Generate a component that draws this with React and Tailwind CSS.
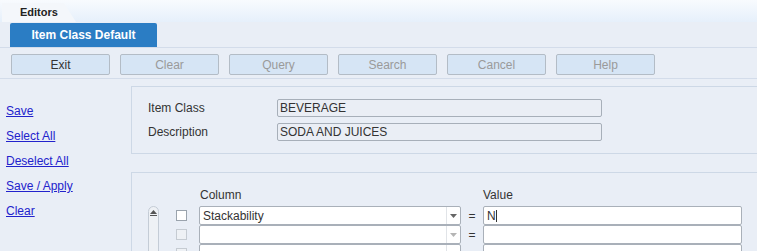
import React from "react";

const btns = ["Exit", "Clear", "Query", "Search", "Cancel", "Help"];
const links = ["Save", "Select All", "Deselect All", "Save / Apply", "Clear"];

function Row({ value, text, enabled }) {
  return (
    <div className="flex items-center h-[20px]">
      <div className="w-[40px] flex justify-end pr-[12px]">
        <div className={`w-[11px] h-[11px] border ${enabled ? "border-[#9aa3ad] bg-white" : "border-[#c5cbd2] bg-[#eef1f5]"}`} />
      </div>
      <div className="w-[262px] h-[19px] border border-[#a9b0b9] rounded-[2px] bg-white flex items-center">
        <span className="flex-1 pl-[3px] text-[12px] text-[#333]">{text}</span>
        <div className="w-[14px] h-full border-l border-[#e1e4e8] flex items-center justify-center">
          <svg width="7" height="4" viewBox="0 0 7 4"><path d="M0 0h7L3.5 4z" fill={enabled ? "#666" : "#b5b5b5"} /></svg>
        </div>
      </div>
      <div className="w-[22px] text-center text-[12px] text-[#333]">=</div>
      <div className="w-[259px] h-[19px] border border-[#a9b0b9] rounded-[2px] bg-white flex items-center">
        <span className="pl-[3px] text-[12px] text-[#333]">{value}</span>
        {value && <span className="w-px h-[12px] bg-[#333]" />}
      </div>
    </div>
  );
}

export default function App() {
  return (
    <div className="w-[757px] h-[251px] overflow-hidden bg-[#e9eef6] font-['Liberation_Sans',Arial,sans-serif] text-[#333]">
      <div className="h-[22px] bg-gradient-to-b from-[#f8fbfe] to-[#e6f0fb] relative">
        <div className="absolute left-[2px] top-[3px] h-[19px] w-[74px] bg-[#f4f7fb] [clip-path:polygon(0_0,62px_0,74px_19px,0_19px)] flex items-center pl-[18px] text-[11px] font-bold text-[#222]">
          Editors
        </div>
      </div>
      <div className="pl-[10px] pt-[1px] h-[26px] border-b border-[#d3dcea]">
        <div className="w-[147px] h-[24px] bg-[#2b7dc4] rounded-t-[2px] flex items-center justify-center text-white text-[12px] font-bold">
          Item Class Default
        </div>
      </div>
      <div className="flex gap-[10px] pl-[11px] pt-[6px] border-b border-[#d3dcea] h-[31px]">
        {btns.map((b, i) => (
          <div
            key={b}
            className={`w-[99px] h-[21px] rounded-[2px] border border-[#b3bcc6] bg-[#d6e5f5] flex items-center justify-center text-[12px] ${i === 0 ? "text-[#333]" : "text-[#9a9a9a]"}`}
          >
            {b}
          </div>
        ))}
      </div>
      <div className="flex pt-[7px]">
        <div className="w-[131px] flex flex-col pl-[6px] pt-[18px] gap-[10px]">
          {links.map((l) => (
            <span key={l} className="text-[12px] leading-[15px] text-[#2222cc] underline">{l}</span>
          ))}
        </div>
        <div className="flex-1 flex flex-col">
          <div className="h-[68px] border border-r-0 border-[#cdd8e6] flex flex-col justify-center gap-[6px] pl-[16px]">
            <div className="flex items-center">
              <span className="w-[129px] text-[12px]">Item Class</span>
              <div className="w-[325px] h-[18px] border border-[#a7afb9] rounded-[2px] bg-[#eaeef5] flex items-center pl-[2px] text-[12px]">BEVERAGE</div>
            </div>
            <div className="flex items-center">
              <span className="w-[129px] text-[12px]">Description</span>
              <div className="w-[325px] h-[18px] border border-[#a7afb9] rounded-[2px] bg-[#eaeef5] flex items-center pl-[2px] text-[12px]">SODA AND JUICES</div>
            </div>
          </div>
          <div className="mt-[18px] h-[90px] border border-r-0 border-b-0 border-[#cdd8e6] flex pl-[16px] pt-[13px]">
            <div className="w-[11px] mt-[20px] h-[80px] border border-[#c4ccd6] rounded-t-[6px] bg-[#eef1f5] flex justify-center pt-[3px]">
              <svg width="7" height="6" viewBox="0 0 7 6"><path d="M0 4L3.5 0L7 4z" fill="#555" /><path d="M0 5h7v1H0z" fill="#555" /></svg>
            </div>
            <div className="flex flex-col">
              <div className="flex h-[18px] mb-[2px] items-center text-[12px]">
                <span className="ml-[41px] w-[283px]">Column</span>
                <span>Value</span>
              </div>
              <Row text="Stackability" value="N" enabled />
              <Row text="" value="" />
              <Row text="" value="" />
            </div>
          </div>
        </div>
      </div>
    </div>
  );
}
